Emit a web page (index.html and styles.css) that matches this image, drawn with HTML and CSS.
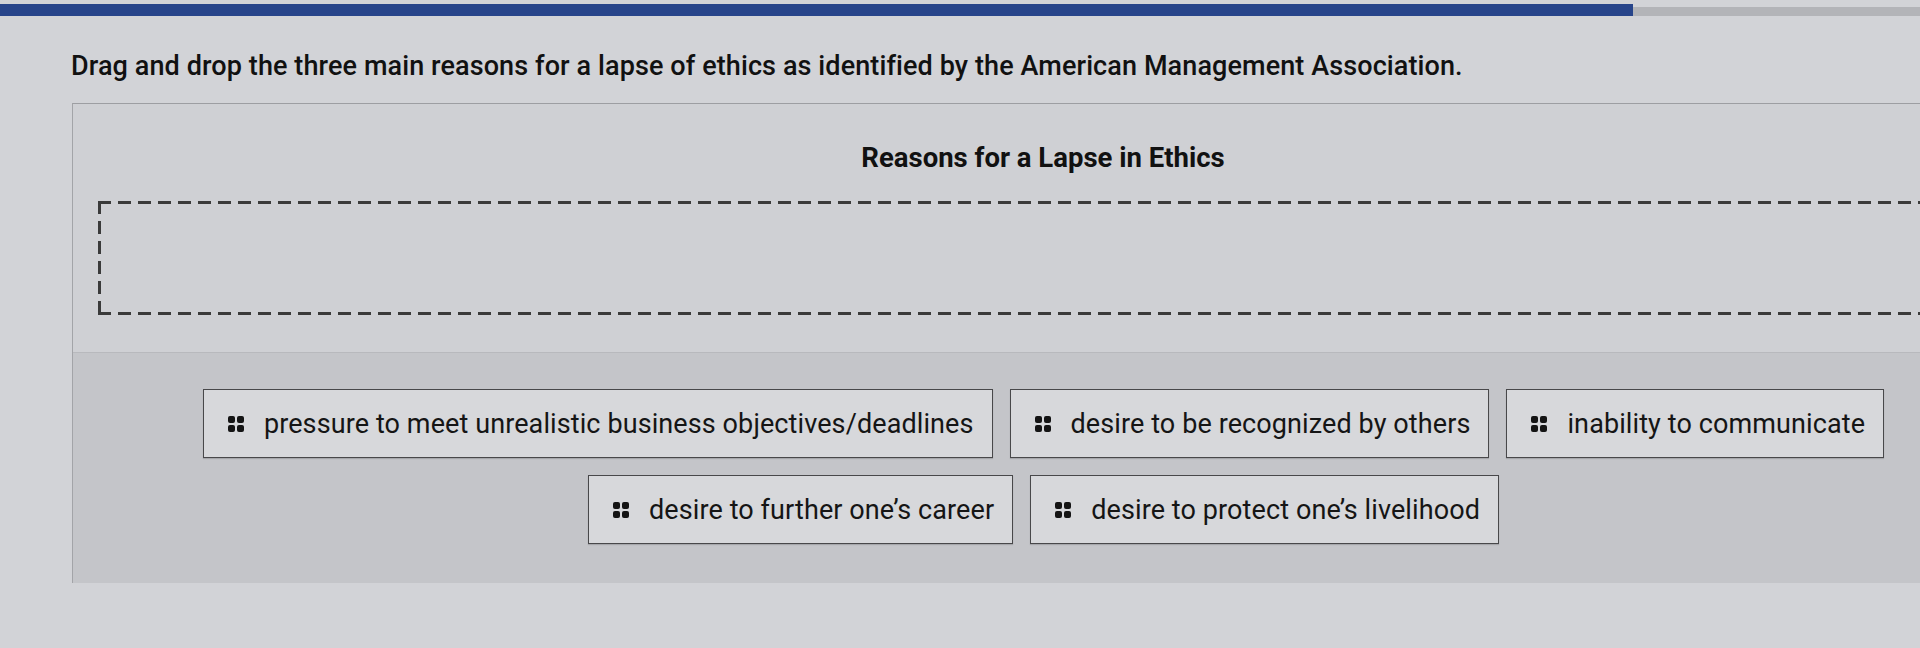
FILE: index.html
```html
<!DOCTYPE html>
<html lang="en">
<head>
<meta charset="utf-8">
<title>Reasons for a Lapse in Ethics</title>
<link rel="stylesheet" href="styles.css">
</head>
<body>
<div class="progress"><div class="progress-fill"></div></div>
<p class="prompt">Drag and drop the three main reasons for a lapse of ethics as identified by the American Management Association.</p>
<section class="panel">
  <div class="target">
    <h2 class="target-title">Reasons for a Lapse in Ethics</h2>
    <div class="dropzone"></div>
  </div>
  <div class="bank">
    <div class="chip"><span class="grip"><i></i><i></i><i></i><i></i></span>pressure to meet unrealistic business objectives/deadlines</div>
    <div class="chip"><span class="grip"><i></i><i></i><i></i><i></i></span>desire to be recognized by others</div>
    <div class="chip"><span class="grip"><i></i><i></i><i></i><i></i></span>inability to communicate</div>
    <div class="chip"><span class="grip"><i></i><i></i><i></i><i></i></span>desire to further one’s career</div>
    <div class="chip"><span class="grip"><i></i><i></i><i></i><i></i></span>desire to protect one’s livelihood</div>
  </div>
</section>
</body>
</html>
```
FILE: styles.css
```css
html, body {
  margin: 0;
  padding: 0;
}
body {
  background: #d2d3d7;
  font-family: Roboto, "Liberation Sans", Arial, sans-serif;
  color: #111;
  overflow: hidden;
  width: 1920px;
  height: 648px;
}
.progress {
  margin-top: 4px;
  height: 12px;
  background: linear-gradient(#d2d3d7 0 3px, #b3b4b8 3px 12px);
  display: flex;
}
.progress-fill {
  width: 1633px;
  height: 12px;
  background: #27448a;
}
.prompt {
  margin: 34px 0 0 71px;
  font-size: 27px;
  line-height: 32px;
  font-weight: 500;
  letter-spacing: 0.1px;
  white-space: nowrap;
}
.panel {
  margin: 21px -94px 0 72px;
  border-top: 1px solid #9d9ea2;
  border-left: 1px solid #a3a4a8;
}
.target {
  background: #cfd0d4;
  padding: 38px 26px 37px 25px;
  border-bottom: 1px solid #b8b9bd;
}
.target-title {
  margin: 0 0 27px 0;
  text-align: center;
  font-size: 27.5px;
  line-height: 32px;
  font-weight: 700;
}
.dropzone {
  height: 114px;
  background:
    repeating-linear-gradient(90deg, #3a3a3a 0 13px, transparent 13px 20px) top left / 100% 3px no-repeat,
    repeating-linear-gradient(90deg, #3a3a3a 0 13px, transparent 13px 20px) bottom left / 100% 3px no-repeat,
    repeating-linear-gradient(180deg, #3a3a3a 0 13px, transparent 13px 20px) top left / 3px 100% no-repeat,
    repeating-linear-gradient(180deg, #3a3a3a 0 13px, transparent 13px 20px) top right / 3px 100% no-repeat;
}
.bank {
  background: #c4c5c9;
  padding: 36px 40px 39px;
  display: flex;
  flex-wrap: wrap;
  justify-content: center;
  column-gap: 17px;
  row-gap: 17px;
}
.chip {
  height: 69px;
  box-sizing: border-box;
  display: flex;
  align-items: center;
  gap: 20px;
  padding: 0 18px 0 24px;
  background: #d7d8db;
  border: 1px solid #48484a;
  font-size: 27px;
  letter-spacing: 0.1px;
  color: #151515;
  white-space: nowrap;
  box-shadow: 0 1px 1px rgba(0,0,0,0.15);
}
.grip {
  display: grid;
  grid-template-columns: 7px 7px;
  grid-template-rows: 7px 7px;
  gap: 2px;
  flex: none;
}
.grip i {
  display: block;
  background: #141414;
  border-radius: 2px;
}
```
